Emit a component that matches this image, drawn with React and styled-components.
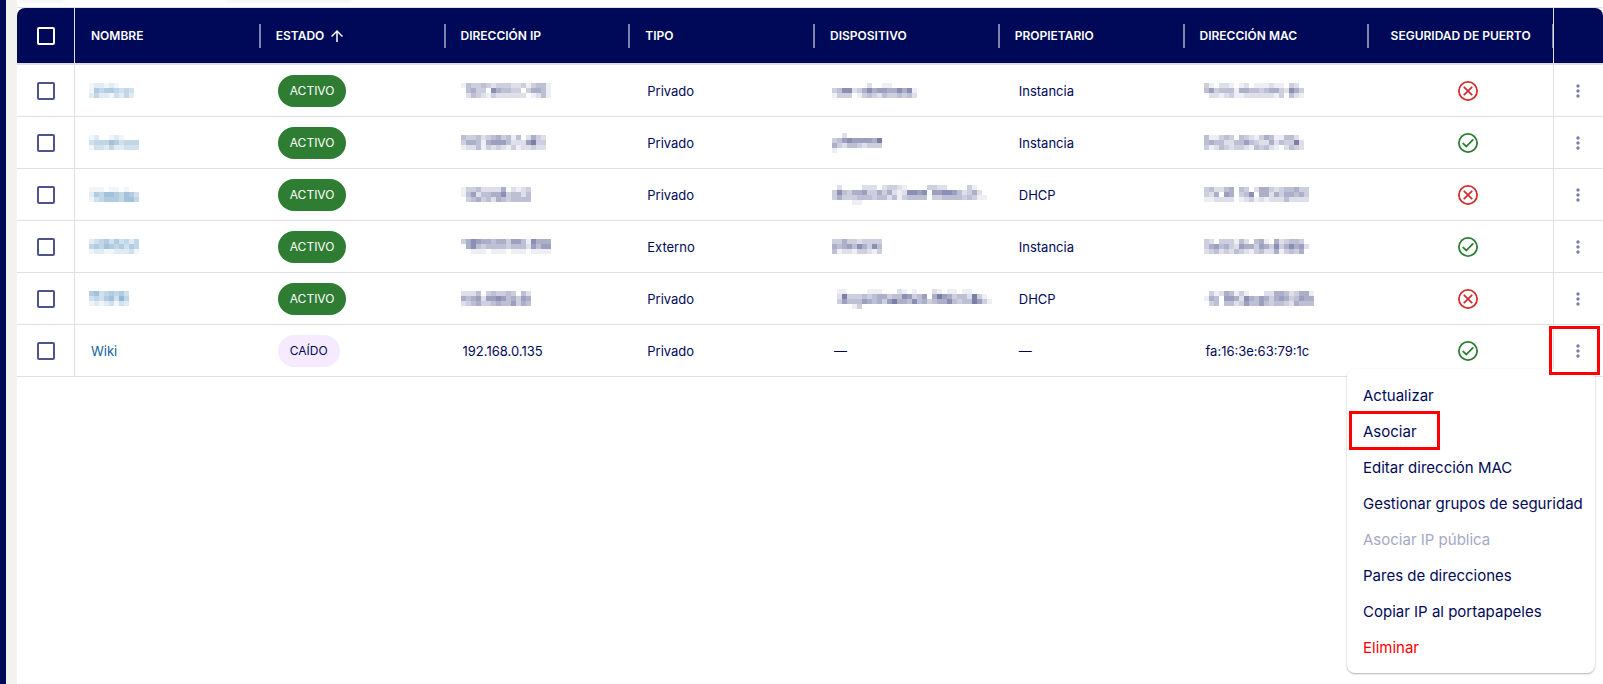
import React from "react";
import styled, { createGlobalStyle } from "styled-components";
import { MdArrowUpward, MdMoreVert } from "react-icons/md";

const COLUMNS = [
    { key: "name", label: "NOMBRE", indent: 16 },
    { key: "status", label: "ESTADO", indent: 18, sorted: true },
    { key: "ip", label: "DIRECCIÓN IP", indent: 18 },
    { key: "type", label: "TIPO", indent: 18 },
    { key: "device", label: "DISPOSITIVO", indent: 20 },
    { key: "owner", label: "PROPIETARIO", indent: 20 },
    { key: "mac", label: "DIRECCIÓN MAC", indent: 22 },
];

// Private values are arrays: one string per line, one digit (0-9) of ink per cell.
const PORTS = [
    {
        name: ["122121000", "154554343", "242213242"],
        status: "ACTIVO",
        ip: ["143343233322313441", "045330754433035541", "024321322222201241"],
        type: "Privado",
        device: ["00000002001100000", "34772357566557571", "13330134324334342"],
        owner: "Instancia",
        mac: ["31022101201112110320", "46344415544345532753", "02212311222222130421"],
        secure: false,
    },
    {
        name: ["1200121000", "3444653444", "1332422333"],
        status: "ACTIVO",
        ip: ["43342345341402532", "35541566642226833", "12241323213122322"],
        type: "Privado",
        device: ["00200000000", "34676666580", "53244323330", "10000000000"],
        owner: "Instancia",
        mac: ["41134304321354114420", "45442244643225243382", "31243233214342102432"],
        secure: true,
    },
    {
        name: ["1110110100", "2546654653", "1345554664"],
        status: "ACTIVO",
        ip: ["13342222502123", "14624455734424", "03453425434444"],
        type: "Privado",
        device: [
            "0200002220233210000332200003100",
            "3743556335352127767066776423520",
            "3533344434424134444033444434311",
            "0000110000000000000000000000000",
        ],
        owner: "DHCP",
        mac: ["342245043025532344533", "325065034705525355453", "112222012312122242222"],
        secure: false,
    },
    {
        name: ["2345353424", "4546545354", "1221122231"],
        status: "ACTIVO",
        ip: ["357655455366417555", "057434444344426466", "001110111011101111"],
        type: "Externo",
        device: ["3353323333", "5456475374", "4122133213"],
        owner: "Instancia",
        mac: ["320333142045105234430", "356453265536537357562", "234232432134225134350"],
        secure: true,
    },
    {
        name: ["56345453", "34356374", "12123132"],
        status: "ACTIVO",
        ip: ["22240343343042", "54562667645365", "23453345446354"],
        type: "Privado",
        device: [
            "01100001110002101000210110110000",
            "02833343455344763460586534428310",
            "03644465453685547453455743448631",
            "00001300000000000000000000000000",
        ],
        owner: "DHCP",
        mac: ["0312541310002255423551", "1540665275465356534655", "0340442364464344325444"],
        secure: false,
    },
    {
        name: "Wiki",
        status: "CAÍDO",
        ip: "192.168.0.135",
        type: "Privado",
        device: "—",
        owner: "—",
        mac: "fa:16:3e:63:79:1c",
        secure: true,
        open: true,
    },
];

const ACTIONS = [
    { label: "Actualizar" },
    { label: "Asociar", marked: true },
    { label: "Editar dirección MAC" },
    { label: "Gestionar grupos de seguridad" },
    { label: "Asociar IP pública", disabled: true },
    { label: "Pares de direcciones" },
    { label: "Copiar IP al portapapeles" },
    { label: "Eliminar", danger: true },
];

const Redacted = ({ lines }) => (
    <StyledRedacted width={lines[0].length * 5} height={lines.length * 5} shapeRendering="crispEdges" aria-hidden="true">
        {lines.map((line, y) =>
            [...line].map((ink, x) => (
                <rect key={`${x}-${y}`} x={x * 5} y={y * 5} width="5" height="5" fillOpacity={ink * 0.065} />
            ))
        )}
    </StyledRedacted>
);

const SecurityIcon = ({ secure }) => (
    <StyledSecurityIcon viewBox="0 0 24 24" role="img" aria-label={secure ? "Activada" : "Desactivada"} $secure={secure}>
        <circle cx="12" cy="12" r="9.1" />
        <path d={secure ? "M6.8 12.1l3.5 3.4 6.9-7.2" : "M7.8 7.8l8.4 8.4M16.2 7.8l-8.4 8.4"} />
    </StyledSecurityIcon>
);

const CellValue = ({ column, value }) => {
    if (column === "status") {
        return <StyledChip $active={value === "ACTIVO"}>{value}</StyledChip>;
    }
    const content = Array.isArray(value) ? <Redacted lines={value} /> : value;
    return column === "name" ? <StyledLink href="#">{content}</StyledLink> : content;
};

const ActionsMenu = () => (
    <StyledMenu>
        {ACTIONS.map(({ label, marked, disabled, danger }) => (
            <StyledMenuItem key={label}>
                <StyledMenuButton type="button" disabled={disabled} $danger={danger}>
                    {label}
                </StyledMenuButton>
                {marked && <StyledItemMark />}
            </StyledMenuItem>
        ))}
    </StyledMenu>
);

const App = () => (
    <>
        <GlobalStyle />
        <StyledPage>
            <StyledContent>
                <StyledToolbar>
                    <StyledToolbarShadow $width={42} />
                    <StyledToolbarShadow $width={124} />
                </StyledToolbar>
                <StyledTable>
                    <colgroup>
                        <StyledCol $width={58} />
                        {COLUMNS.map(({ key }) => (
                            <col key={key} />
                        ))}
                        <col />
                        <StyledCol $width={50} />
                    </colgroup>
                    <thead>
                        <tr>
                            <StyledSelectHead>
                                <StyledCheckbox type="checkbox" aria-label="Seleccionar todo" $light />
                            </StyledSelectHead>
                            {COLUMNS.map(({ key, label, sorted }) => (
                                <StyledHead key={key}>
                                    <StyledHeadLabel>
                                        {label}
                                        {sorted && <MdArrowUpward size={18} />}
                                    </StyledHeadLabel>
                                </StyledHead>
                            ))}
                            <StyledHead>
                                <StyledHeadLabel $center>SEGURIDAD DE PUERTO</StyledHeadLabel>
                            </StyledHead>
                            <StyledActionsHead />
                        </tr>
                    </thead>
                    <tbody>
                        {PORTS.map((port, index) => (
                            <tr key={index}>
                                <StyledSelectCell>
                                    <StyledCheckbox type="checkbox" aria-label="Seleccionar fila" />
                                </StyledSelectCell>
                                {COLUMNS.map(({ key, indent }) => (
                                    <StyledCell key={key} $indent={indent}>
                                        <CellValue column={key} value={port[key]} />
                                    </StyledCell>
                                ))}
                                <StyledIconCell>
                                    <SecurityIcon secure={port.secure} />
                                </StyledIconCell>
                                <StyledActionsCell>
                                    <StyledMoreButton type="button" aria-label="Acciones">
                                        <MdMoreVert size={20} />
                                    </StyledMoreButton>
                                    {port.open && <ActionsMenu />}
                                    {port.open && <StyledRowMark />}
                                </StyledActionsCell>
                            </tr>
                        ))}
                    </tbody>
                </StyledTable>
            </StyledContent>
        </StyledPage>
    </>
);

export default App;

const NAVY = "#000957";
const LINE = "#e0e0eb";

const GlobalStyle = createGlobalStyle`
    * {
        box-sizing: border-box;
    }
    body {
        margin: 0;
        background: #fff;
        color: ${NAVY};
        font-family: Inter, "Liberation Sans", sans-serif;
        font-size: 13px;
    }
    button {
        font-family: inherit;
    }
`;

const StyledPage = styled.div`
    min-height: 100vh;
    padding-left: 11px;
    border-left: 6px solid ${NAVY};
    background: #f4f2ee;
`;

const StyledContent = styled.main`
    min-height: 100vh;
    background: #fff;
`;

const StyledToolbar = styled.div`
    display: flex;
    gap: 164px;
    height: 8px;
    padding-left: 4px;
    overflow: hidden;
    border-bottom: 1px solid ${LINE};
`;

const StyledToolbarShadow = styled.div`
    width: ${({ $width }) => $width}px;
    height: 0;
    box-shadow: 0 0 4px 1px rgba(0, 0, 0, 0.12);
`;

const StyledTable = styled.table`
    width: 100%;
    table-layout: fixed;
    border-collapse: separate;
    border-spacing: 0;
`;

const StyledCol = styled.col`
    width: ${({ $width }) => $width}px;
`;

const StyledHead = styled.th`
    position: relative;
    height: 57px;
    padding: 0 16px;
    border-bottom: 2px solid ${LINE};
    background: ${NAVY};
    color: #fff;
    font-size: 12px;
    font-weight: 600;
    text-align: left;
    white-space: nowrap;

    &::after {
        content: "";
        position: absolute;
        z-index: 1;
        top: 16px;
        right: -1px;
        width: 2px;
        height: 24px;
        background: #8084ab;
    }
`;

const StyledSelectHead = styled(StyledHead)`
    padding: 0;
    border-right: 1px solid ${LINE};
    border-top-left-radius: 8px;
    text-align: center;

    &::after {
        display: none;
    }
`;

const StyledActionsHead = styled(StyledHead)`
    z-index: 2;
    border-left: 1px solid ${LINE};
    border-top-right-radius: 8px;

    &::after {
        display: none;
    }
`;

const StyledHeadLabel = styled.span`
    display: flex;
    align-items: center;
    justify-content: ${({ $center }) => ($center ? "center" : "flex-start")};
    gap: 4px;
`;

const StyledCell = styled.td`
    height: 52px;
    padding: 0 0 0 ${({ $indent }) => $indent || 0}px;
    border-bottom: 1px solid ${LINE};
    white-space: nowrap;
`;

const StyledSelectCell = styled(StyledCell)`
    border-right: 1px solid ${LINE};
    text-align: center;
`;

const StyledIconCell = styled(StyledCell)`
    padding-left: 14px;
`;

const StyledActionsCell = styled(StyledCell)`
    position: relative;
    padding-right: 2px;
    border-left: 1px solid ${LINE};
`;

const StyledSecurityIcon = styled.svg`
    display: block;
    width: 24px;
    height: 24px;
    margin: 0 auto;
    fill: none;
    stroke: ${({ $secure }) => ($secure ? "#2e7d32" : "#d32f2f")};
    stroke-width: 1.8;
`;

const StyledCheckbox = styled.input`
    display: block;
    width: 18px;
    height: 18px;
    margin: 0 auto;
    appearance: none;
    border: 2px solid ${({ $light }) => ($light ? "#fff" : "#4d538c")};
    border-radius: 2px;
`;

const StyledLink = styled.a`
    color: #0f62a4;
    text-decoration: none;
`;

const StyledRedacted = styled.svg`
    display: block;
    margin-left: -2px;
    fill: currentColor;
`;

const StyledChip = styled.span`
    display: inline-flex;
    align-items: center;
    height: 32px;
    padding: 0 12px;
    border-radius: 16px;
    background: ${({ $active }) => ($active ? "#2e7d32" : "#f5eaff")};
    color: ${({ $active }) => ($active ? "#fff" : NAVY)};
    font-size: 12px;
`;

const StyledMoreButton = styled.button`
    display: block;
    margin: 0 auto;
    padding: 0;
    border: 0;
    background: none;
    color: #7a7fa8;

    svg {
        display: block;
    }
`;

const StyledMenu = styled.ul`
    position: absolute;
    z-index: 3;
    top: 44px;
    right: 8px;
    width: 248px;
    margin: 0;
    padding: 8px 0;
    border-radius: 8px;
    background: #fff;
    box-shadow: 0 1px 2px rgba(0, 0, 0, 0.3);
    list-style: none;
`;

const StyledMenuItem = styled.li`
    position: relative;
`;

const StyledMenuButton = styled.button`
    display: block;
    width: 100%;
    height: 36px;
    padding: 0 16px;
    border: 0;
    background: none;
    color: ${({ $danger }) => ($danger ? "#ff0000" : NAVY)};
    font-size: 15px;
    text-align: left;
    white-space: nowrap;

    &:disabled {
        color: #a6a8c6;
    }
`;

const StyledMark = styled.span`
    position: absolute;
    border: 3px solid #ff0000;
    pointer-events: none;
`;

const StyledItemMark = styled(StyledMark)`
    top: -2px;
    left: 2px;
    width: 91px;
    height: 39px;
`;

const StyledRowMark = styled(StyledMark)`
    z-index: 4;
    top: 1px;
    right: 3px;
    width: 51px;
    height: 49px;
`;
